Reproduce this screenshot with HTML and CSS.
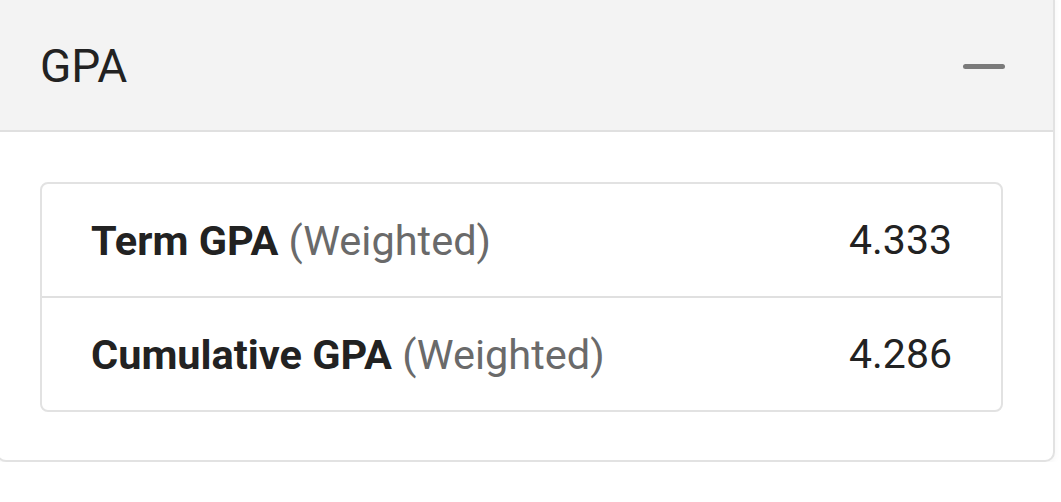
FILE: index.html
```html
<!DOCTYPE html>
<html lang="en">
<head>
    <meta charset="UTF-8">
    <meta name="viewport" content="width=device-width, initial-scale=1.0">
    <title>GPA</title>
    <link rel="stylesheet" href="styles.css">
</head>
<body>
    <div class="panel">
        <!-- 헤더 -->
        <div class="panel-head">
            <h2>GPA</h2>
            <span class="collapse"></span>
        </div>

        <!-- 내용 -->
        <div class="panel-body">
            <ul class="gpa-list">
                <li class="gpa-row">
                    <span class="label"><b>Term GPA</b> (Weighted)</span>
                    <span class="value">4.333</span>
                </li>
                <li class="gpa-row">
                    <span class="label"><b>Cumulative GPA</b> (Weighted)</span>
                    <span class="value">4.286</span>
                </li>
            </ul>
        </div>
    </div>
</body>
</html>
```

FILE: styles.css
```css
body {
    margin: 0;
    padding: 0;
    font-family: Roboto, "Noto Sans", Arial, sans-serif;
    background-color: #ffffff;
    color: #222;
}
.panel {
    margin: -12px 6px 0 -4px;
    border: 2px solid #e2e2e2;
    border-radius: 10px;
    background: white;
    box-shadow: 0 3px 6px rgba(0, 0, 0, 0.04);
    overflow: hidden;
}
.panel-head {
    height: 142px;
    box-sizing: border-box;
    padding: 12px 48px 0 42px;
    display: flex;
    align-items: center;
    justify-content: space-between;
    background-color: #f3f3f3;
    border-bottom: 2px solid #e0e0e0;
}
.panel-head h2 {
    margin: 0;
    font-size: 46px;
    font-weight: 400;
    color: #222;
}
.collapse {
    display: block;
    width: 42px;
    height: 5px;
    border-radius: 3px;
    background-color: #7a7a7a;
}
.panel-body {
    padding: 50px 50px 48px 42px;
}
.gpa-list {
    list-style: none;
    margin: 0;
    padding: 0;
    border: 2px solid #e2e2e2;
    border-radius: 8px;
}
.gpa-row {
    height: 112px;
    display: flex;
    align-items: center;
    justify-content: space-between;
    padding: 0 49px 0 49px;
    font-size: 41px;
}
.gpa-row + .gpa-row {
    border-top: 2px solid #e0e0e0;
}
.label {
    font-size: 41.5px;
    color: #6a6a6a;
}
.label b {
    color: #222;
    font-weight: 700;
}
.value {
    color: #222;
}
```
